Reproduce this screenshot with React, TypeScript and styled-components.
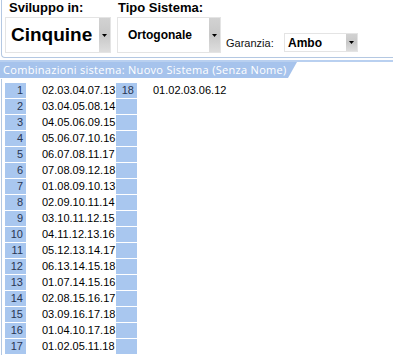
import { FC } from 'react';
import styled, { createGlobalStyle } from 'styled-components';

interface Combination {
  id: number;
  numbers: string;
}

const combinations: Combination[] = [
  { id: 1, numbers: '02.03.04.07.13' },
  { id: 2, numbers: '03.04.05.08.14' },
  { id: 3, numbers: '04.05.06.09.15' },
  { id: 4, numbers: '05.06.07.10.16' },
  { id: 5, numbers: '06.07.08.11.17' },
  { id: 6, numbers: '07.08.09.12.18' },
  { id: 7, numbers: '01.08.09.10.13' },
  { id: 8, numbers: '02.09.10.11.14' },
  { id: 9, numbers: '03.10.11.12.15' },
  { id: 10, numbers: '04.11.12.13.16' },
  { id: 11, numbers: '05.12.13.14.17' },
  { id: 12, numbers: '06.13.14.15.18' },
  { id: 13, numbers: '01.07.14.15.16' },
  { id: 14, numbers: '02.08.15.16.17' },
  { id: 15, numbers: '03.09.16.17.18' },
  { id: 16, numbers: '01.04.10.17.18' },
  { id: 17, numbers: '01.02.05.11.18' },
  { id: 18, numbers: '01.02.03.06.12' },
];

interface DropdownProps {
  value: string;
  width: number;
  height: number;
  fontSize: number;
  padLeft: number;
}

const Dropdown: FC<DropdownProps> = ({ value, width, height, fontSize, padLeft }) => (
  <SelectBox style={{ width, height }}>
    <SelectValue $size={fontSize} $pad={padLeft}>
      {value}
    </SelectValue>
    <ArrowButton>
      <svg width='5' height='3' viewBox='0 0 5 3'>
        <polygon points='0,0 5,0 2.5,3' fill='#000' />
      </svg>
    </ArrowButton>
  </SelectBox>
);

const App: FC = () => {
  // second column only holds the 18th combination, the rest stays empty
  const left = combinations.slice(0, 17);
  const extra = combinations[17];

  return (
    <>
      <GlobalStyle />
      <Page>
        <TopPanel>
          <FieldGroup>
            <FieldLabel $indent={4}>Sviluppo in:</FieldLabel>
            <Dropdown value='Cinquine' width={106} height={36} fontSize={19} padLeft={5} />
          </FieldGroup>
          <FieldGroup $gap={6}>
            <FieldLabel $indent={1}>Tipo Sistema:</FieldLabel>
            <Dropdown value='Ortogonale' width={104} height={36} fontSize={12} padLeft={10} />
          </FieldGroup>
          <GuaranteeRow>
            <SmallLabel>Garanzia:</SmallLabel>
            <Dropdown value='Ambo' width={74} height={19} fontSize={12} padLeft={3} />
          </GuaranteeRow>
        </TopPanel>

        <TabBar>
          <Tab>Combinazioni sistema: Nuovo Sistema (Senza Nome)</Tab>
        </TabBar>

        <ListArea>
          <ComboGrid>
            {left.map((combo, index) => (
              <ComboRow key={combo.id}>
                <IndexCell>{combo.id}</IndexCell>
                <NumbersCell>{combo.numbers}</NumbersCell>
                <IndexCell>{index === 0 ? extra.id : ''}</IndexCell>
                <NumbersCell>{index === 0 ? extra.numbers : ''}</NumbersCell>
              </ComboRow>
            ))}
          </ComboGrid>
        </ListArea>
      </Page>
    </>
  );
};

export default App;

const GlobalStyle = createGlobalStyle`
  html, body {
    margin: 0;
    padding: 0;
    background: #fff;
    overflow: hidden;
  }
  body {
    font-family: 'Liberation Sans', Arial, sans-serif;
    color: #000;
  }
`;

const Page = styled.div`
  width: 393px;
  height: 355px;
  overflow: hidden;
`;

const TopPanel = styled.div`
  display: flex;
  align-items: flex-start;
  box-sizing: border-box;
  height: 58px;
  margin-left: 1px;
  padding-left: 3px;
  border-left: 1px solid #b4c8e2;
  border-bottom: 1px solid #b4c8e2;
  border-bottom-left-radius: 4px;
`;

const FieldGroup = styled.div<{ $gap?: number }>`
  display: flex;
  flex-direction: column;
  margin-left: ${(p) => p.$gap || 0}px;
`;

const FieldLabel = styled.div<{ $indent: number }>`
  height: 17px;
  padding-left: ${(p) => p.$indent}px;
  font-size: 13px;
  font-weight: bold;
  line-height: 16px;
`;

const GuaranteeRow = styled.div`
  display: flex;
  align-items: center;
  margin-top: 33px;
  margin-left: 5px;
`;

const SmallLabel = styled.span`
  width: 58px;
  font-size: 11px;
  color: #111;
`;

const SelectBox = styled.div`
  display: flex;
  box-sizing: border-box;
  border: 1px solid #e4e4e4;
  background: #fff;
`;

const SelectValue = styled.div<{ $size: number; $pad: number }>`
  flex: 1;
  display: flex;
  align-items: center;
  padding-left: ${(p) => p.$pad}px;
  font-size: ${(p) => p.$size}px;
  font-weight: bold;
  white-space: nowrap;
`;

const ArrowButton = styled.div`
  width: 11px;
  display: flex;
  align-items: center;
  justify-content: center;
  background: linear-gradient(to bottom, #d2d2d2 0%, #c8c8c8 50%, #dedede 100%);
  svg {
    display: block;
  }
`;

const TabBar = styled.div`
  margin-top: 2px;
  height: 17px;
  border-top: 2px solid #b9d0f0;
`;

const Tab = styled.div`
  width: 297px;
  height: 16px;
  box-sizing: border-box;
  padding-left: 3px;
  background: #a6c3ec;
  clip-path: polygon(0 0, 100% 0, calc(100% - 9px) 100%, 0 100%);
  color: #fff;
  font-family: 'Open Sans', 'DejaVu Sans', sans-serif;
  font-size: 11px;
  letter-spacing: 0.3px;
  line-height: 16px;
  white-space: nowrap;
`;

const ListArea = styled.div`
  height: 300px;
  margin-left: 1px;
  padding: 4px 0 0 3px;
  border-left: 1px solid #b4c8e2;
`;

const ComboGrid = styled.div`
  display: flex;
  flex-direction: column;
  row-gap: 1px;
`;

const ComboRow = styled.div`
  display: grid;
  grid-template-columns: 21px 90px 21px 1fr;
  height: 15px;
  font-size: 11px;
  line-height: 15px;
`;

const IndexCell = styled.div`
  background: #a9c7ef;
  text-align: right;
  padding-right: 3px;
  color: #283654;
`;

const NumbersCell = styled.div`
  padding-left: 16px;
  color: #000;
`;
